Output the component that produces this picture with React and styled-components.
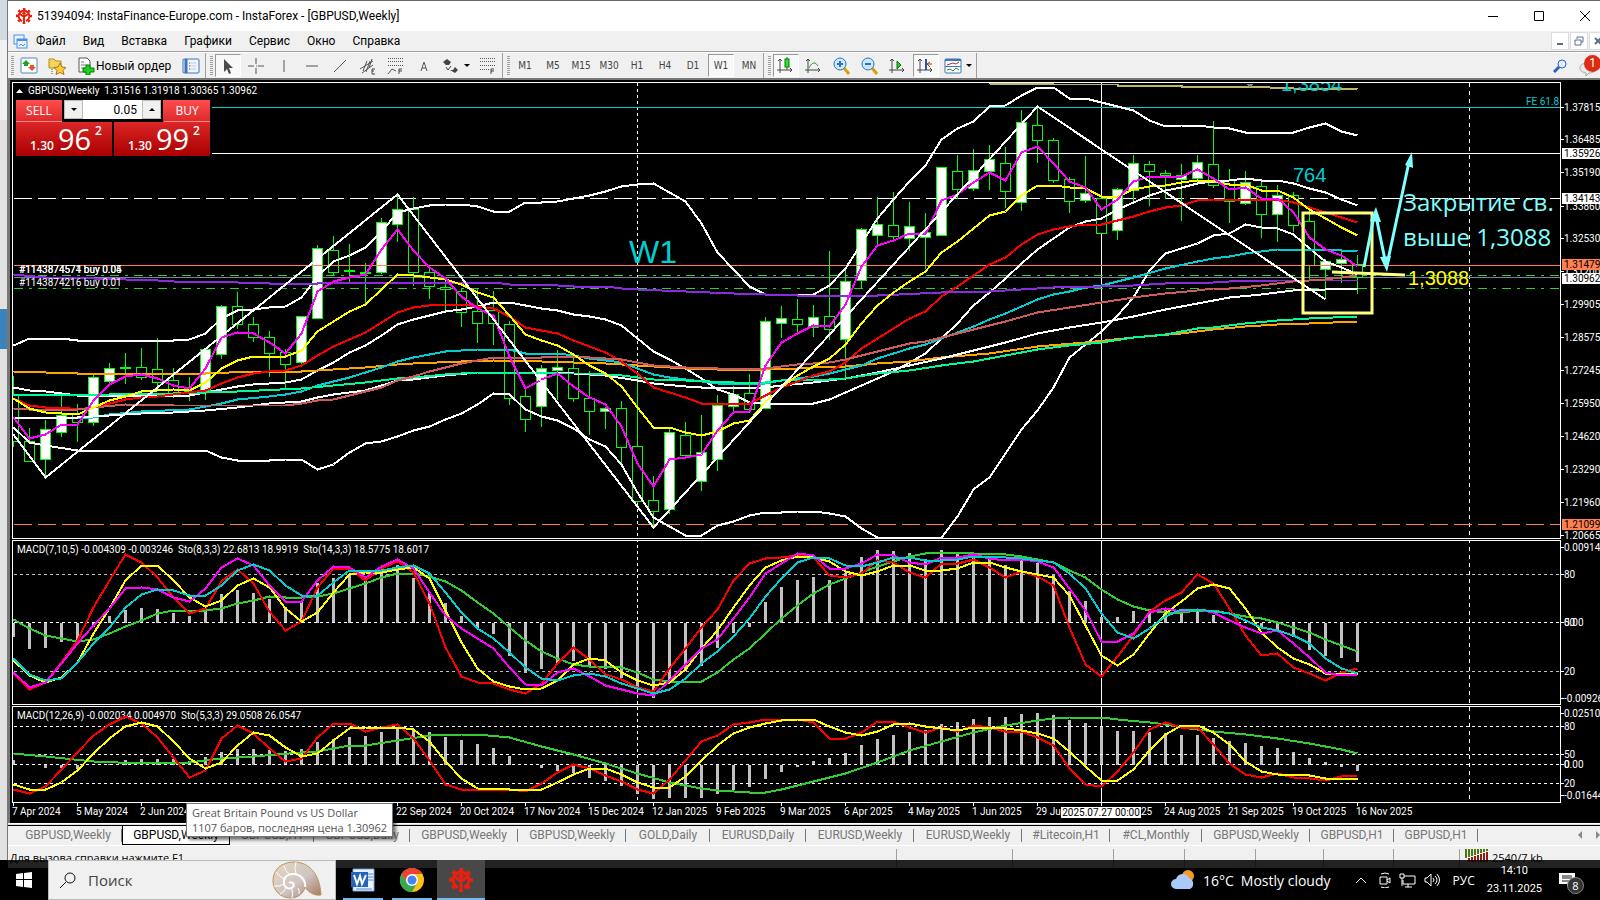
import styled, { createGlobalStyle, css } from 'styled-components';

const BAR_STEP = 16;
const FIRST_BAR = 13;
const barX = (index) => FIRST_BAR + index * BAR_STEP;

const parsePairs = (text) => text.split(' ').map((pair) => pair.split(',').map(Number));
const toPoints = (text) =>
  parsePairs(text)
    .map(([index, y]) => `${barX(index)},${y}`)
    .join(' ');

// high, low, body top, body bottom, 1 = bullish
const candles = [
  [375, 446, 395, 441, 0], [427, 461, 441, 461, 0], [419, 476, 429, 459, 1], [395, 436, 415, 432, 1],
  [403, 441, 413, 422, 0], [373, 425, 377, 422, 1], [362, 383, 368, 381, 1], [352, 383, 367, 368, 0],
  [347, 379, 367, 377, 0], [337, 387, 369, 382, 0], [367, 397, 380, 393, 0], [376, 400, 391, 392, 0],
  [348, 399, 349, 390, 1], [304, 358, 306, 354, 1], [291, 328, 306, 324, 0], [316, 341, 324, 337, 0],
  [330, 376, 337, 353, 0], [348, 387, 352, 364, 0], [315, 364, 316, 362, 1], [244, 318, 248, 318, 1],
  [235, 275, 250, 272, 0], [243, 282, 270, 271, 0], [262, 302, 272, 272, 0], [217, 273, 222, 272, 1],
  [195, 241, 209, 224, 1], [196, 285, 209, 272, 0], [268, 298, 272, 286, 0], [277, 309, 287, 289, 0],
  [288, 326, 291, 312, 0], [288, 342, 311, 323, 0], [290, 344, 310, 323, 0], [320, 404, 324, 398, 0],
  [389, 431, 396, 419, 0], [364, 426, 368, 406, 1], [349, 399, 367, 370, 1], [352, 401, 368, 398, 0],
  [370, 434, 398, 411, 0], [406, 428, 408, 411, 1], [400, 463, 408, 447, 0], [373, 502, 446, 501, 0],
  [475, 527, 500, 511, 0], [428, 513, 432, 509, 1], [421, 458, 435, 455, 0], [414, 490, 452, 481, 1],
  [394, 470, 405, 459, 1], [385, 410, 394, 406, 1], [373, 412, 393, 409, 0], [316, 408, 321, 408, 1],
  [305, 337, 318, 323, 1], [298, 332, 319, 324, 0], [304, 336, 317, 327, 1], [250, 339, 316, 329, 0],
  [267, 377, 281, 339, 1], [227, 287, 229, 280, 1], [196, 244, 224, 235, 1], [191, 238, 225, 236, 0],
  [201, 250, 226, 238, 1], [212, 268, 232, 237, 1], [167, 235, 167, 235, 1], [154, 198, 171, 189, 0],
  [148, 190, 170, 188, 1], [144, 189, 159, 171, 1], [146, 207, 163, 191, 0], [109, 210, 122, 202, 1],
  [106, 162, 125, 140, 0], [137, 182, 140, 180, 0], [176, 212, 179, 201, 0], [155, 202, 193, 200, 1],
  [195, 233, 198, 233, 0], [187, 239, 189, 230, 1], [154, 202, 163, 190, 1], [160, 205, 164, 171, 0],
  [169, 198, 173, 175, 0], [163, 220, 175, 179, 1], [154, 181, 162, 178, 1], [120, 187, 164, 185, 0],
  [168, 222, 180, 201, 0], [170, 204, 182, 203, 1], [180, 237, 186, 214, 0], [184, 241, 195, 214, 1],
  [191, 231, 195, 225, 0], [209, 279, 221, 265, 0], [258, 298, 261, 269, 1], [248, 282, 259, 263, 1],
  [254, 293, 264, 277, 0],
];

const priceLines = [
  ['#bdb76b', '61,83 65,84 69,84 69,85 73,85 73,86 77,86 80,88 84,89'],
  ['#fff', '0,345 1,338 3,338 4,340 10,340 11,339 12,333 13,318 14,310 15,309 16,307 17,306 18,297 19,276 20,261 21,255 22,247 23,231 24,212 25,208 26,205 27,204 28,204 29,206 30,211 31,211 32,202 33,202 34,201 35,198 36,195 37,191 38,186 39,184 40,183 41,192 42,201 43,223 44,252 45,269 46,286 47,294 50,294 51,285 52,268 53,243 54,218 55,199 56,181 57,165 58,139 59,128 60,121 61,106 62,105 63,95 64,87 65,87 66,98 67,98 68,102 69,106 70,110 71,120 72,126 73,125 74,125 75,127 76,128 77,132 80,132 81,127 82,123 83,131 84,135'],
  ['#fff', '0,427 1,442 2,445 4,450 12,450 13,457 14,460 16,460 17,459 18,459 19,469 20,464 21,452 22,443 23,441 24,436 25,430 26,426 27,419 28,413 29,404 30,393 31,394 32,409 33,416 34,420 35,428 36,439 37,446 38,464 39,492 40,517 41,526 42,535 43,535 44,525 45,521 46,515 47,512 48,512 49,511 50,511 51,513 52,516 53,528 54,537 57,538 58,537 59,516 60,489 61,477 62,453 63,429 64,410 65,387 66,357 67,344 68,331 69,315 70,297 71,270 72,253 73,248 74,243 75,235 76,233 77,224 78,227 79,228 80,234 81,248 82,261 83,267 84,274'],
  ['#fff', '0,387 1,390 2,391 3,393 4,395 11,395 12,392 13,389 14,386 15,384 17,382 18,379 19,370 20,362 21,352 22,345 23,335 24,324 25,319 26,315 27,311 28,309 29,306 30,302 31,302 32,305 33,308 34,310 35,314 36,316 37,319 38,325 39,338 40,351 41,359 42,368 43,378 44,389 45,394 46,402 47,403 49,403 50,403 51,399 52,392 53,385 54,378 55,371 56,362 57,353 58,338 59,323 60,305 61,292 62,278 63,263 64,249 65,238 66,227 67,221 68,218 69,209 70,202 71,195 72,190 73,187 74,183 75,181 76,180 77,178 78,180 79,180 80,183 81,188 82,192 83,199 84,205'],
  ['#ffa500', '0,371 2,372 4,373 12,373 15,371 18,371 20,369 22,367 24,364 25,363 28,361 30,360 33,361 35,362 37,363 40,366 42,368 44,369 47,369 49,368 50,367 52,366 54,363 56,361 58,357 61,353 64,346 67,342 70,337 73,333 75,329 77,326 79,324 81,323 84,321'],
  ['#00ced1', '1,418 5,417 6,414 8,411 11,409 12,406 13,403 14,399 16,396 17,394 18,391 19,385 20,381 21,377 22,372 23,367 24,361 25,357 26,354 27,351 28,350 29,349 31,349 32,353 34,353 35,355 36,358 37,360 38,362 39,368 40,374 41,377 42,379 44,383 46,384 47,383 48,380 50,376 51,373 52,369 53,365 54,358 56,348 57,344 58,338 60,326 61,319 62,313 63,306 64,299 65,294 66,291 67,287 68,285 69,281 70,277 72,268 74,261 75,258 76,256 77,253 78,251 79,249 82,249 83,250 84,251'],
  ['#fff', '0,417 4,417 6,415 8,413 10,412 12,410 14,407 16,403 18,401 19,397 20,394 22,390 24,380 25,379 27,375 29,372 31,372 35,373 37,375 39,380 40,383 42,386 43,387 47,387 48,385 50,382 51,380 52,378 54,372 56,365 58,358 60,350 62,342 64,333 66,327 68,322 70,316 72,309 74,303 76,297 78,294 80,290 82,289 84,288'],
  ['#00fa9a', '0,394 2,395 10,393 14,391 18,388 22,382 24,378 25,377 27,374 29,372 31,372 34,373 36,373 38,375 40,379 42,380 45,382 47,382 48,380 50,379 51,379 52,378 54,373 56,370 58,365 60,361 62,355 64,349 66,345 68,342 70,337 72,334 74,328 75,327 77,323 79,320 81,318 84,316'],
  ['#ff0000', '0,398 1,405 2,407 3,407 4,409 5,407 6,403 7,399 8,397 9,396 11,392 12,390 13,383 14,377 15,373 16,371 17,370 18,365 19,355 20,346 21,339 22,332 23,322 24,312 25,307 26,305 27,304 28,304 29,306 30,308 31,316 32,327 33,330 34,333 35,340 36,346 37,352 38,361 39,373 40,387 41,392 42,397 43,403 46,403 47,395 48,387 49,381 50,375 51,371 52,362 53,348 54,338 55,328 56,318 57,311 58,296 59,286 60,275 61,264 62,257 63,244 64,234 65,229 66,226 67,224 68,224 69,220 70,216 71,211 72,207 73,205 74,200 75,199 79,199 80,202 81,207 82,212 83,217 84,222'],
  ['#8a2be2', '0,274 2,277 5,278 7,279 9,280 10,281 14,282 16,283 19,283 20,282 30,282 31,284 34,285 35,286 37,286 38,288 39,289 42,291 45,293 49,295 54,295 58,292 61,291 63,289 65,287 68,286 70,285 72,283 75,282 76,281 79,280 84,280'],
  ['#cd5c5c', '0,408 1,409 4,409 5,407 7,404 10,405 17,405 18,403 19,400 20,399 21,395 22,391 23,387 24,380 25,376 26,371 27,367 28,363 29,360 30,357 33,357 35,356 37,358 38,359 39,362 40,365 42,367 44,368 47,368 48,366 49,364 50,363 51,362 52,359 53,355 54,351 56,343 57,341 58,337 60,329 62,321 64,312 66,307 68,302 70,297 72,293 74,290 75,288 76,288 78,285 80,281 82,279 83,277 84,275'],
  ['#ffff00', '0,398 1,408 2,412 4,414 5,407 6,400 7,396 8,391 9,390 10,389 11,390 12,382 13,368 14,360 15,356 17,356 18,350 19,331 20,321 21,311 22,304 23,289 24,274 25,275 26,277 27,279 28,284 29,292 30,297 31,315 32,334 33,340 34,345 35,354 36,365 37,373 38,386 39,407 40,427 41,427 42,432 43,435 44,431 45,423 46,420 47,402 48,387 49,375 50,366 51,358 52,344 53,323 54,305 55,292 56,281 57,271 58,252 59,241 60,228 61,215 62,211 63,195 64,185 65,185 66,187 67,188 68,196 69,196 70,189 71,186 72,185 73,182 74,180 75,181 76,184 77,184 78,190 79,190 80,197 81,209 82,218 83,227 84,235'],
  ['#ff00ff', '0,417 1,438 2,434 3,424 4,424 5,400 6,384 7,376 8,374 9,378 10,385 11,388 12,368 13,337 14,332 15,333 16,342 17,353 18,333 19,291 20,281 21,277 22,274 23,249 24,229 25,250 26,267 27,278 28,296 29,308 30,315 31,356 32,388 33,379 34,373 35,386 36,397 37,404 38,426 39,463 40,486 41,459 42,457 43,454 44,430 45,412 46,411 47,365 48,342 49,333 50,325 51,326 52,304 53,266 54,245 55,240 56,233 57,233 58,200 59,194 60,182 61,172 62,180 63,152 64,146 65,163 66,181 67,187 68,209 69,199 70,181 71,176 73,176 74,169 75,178 76,189 77,187 78,198 79,198 80,212 81,237 82,249 83,255 84,266'],
];

const fastHistogram =
  '0,636 1,648 2,647 3,641 4,640 5,626 6,615 7,609 8,607 9,608 10,612 11,615 12,610 13,593 14,589 15,592 16,598 17,606 18,600 19,582 20,577 21,574 22,579 23,570 24,564 25,577 26,592 27,602 28,615 29,627 30,633 31,655 32,672 33,668 34,663 35,660 36,665 37,668 38,677 39,688 40,697 41,680 42,670 43,665 44,647 45,632 46,626 47,601 48,586 49,579 50,576 51,579 52,572 53,556 54,549 55,550 56,552 57,558 58,549 59,553 60,555 61,555 62,564 63,558 64,562 65,574 66,590 67,600 68,616 69,616 70,610 71,608 72,609 73,610 74,610 75,614 78,627 79,630 80,636 81,649 82,655 83,657 84,661';

const fastLines = [
  ['#32cd32', '0,619 1,628 2,635 3,638 4,641 5,639 6,633 7,626 8,620 9,613 10,610 12,610 13,608 14,603 15,600 16,596 17,597 18,597 19,596 20,593 21,588 22,583 23,577 24,573 25,573 26,576 27,581 28,590 29,602 30,613 31,627 32,640 33,651 34,658 35,664 36,666 37,666 38,667 39,672 40,679 41,681 43,681 44,672 45,659 46,648 47,633 48,618 49,605 50,593 51,584 52,578 53,572 54,566 55,561 56,556 57,553 58,552 59,552 60,553 61,553 62,554 63,556 64,559 65,562 66,570 67,577 68,589 69,599 70,606 71,610 72,612 73,612 74,610 75,610 76,613 77,616 78,618 79,622 80,627 81,632 82,639 83,645 84,651'],
  ['#ff0000', '0,673 1,689 2,682 3,662 4,640 5,607 6,580 7,554 8,562 9,577 10,597 11,613 12,608 13,581 14,569 15,583 16,611 17,630 18,621 19,587 20,568 21,568 22,580 23,568 24,561 25,572 26,603 27,647 28,676 29,682 30,683 31,689 32,693 33,683 34,663 35,647 36,659 37,674 38,679 39,687 40,691 41,668 42,648 43,627 44,609 45,580 46,563 47,558 48,557 49,555 50,557 51,575 52,577 53,573 54,560 55,562 56,572 57,577 58,563 59,563 60,559 61,567 62,577 63,571 64,576 65,585 66,627 67,664 68,676 69,656 70,635 71,611 72,600 73,592 74,574 75,583 76,608 77,635 78,655 79,653 80,667 81,673 82,680 83,672 84,668'],
  ['#ffff00', '0,660 1,675 2,682 3,677 4,662 5,633 6,608 7,580 8,565 9,565 10,580 11,597 12,606 13,600 14,585 15,578 16,587 17,608 18,621 19,612 20,592 21,574 22,572 23,572 24,569 25,567 26,578 27,610 28,642 29,668 30,681 31,686 32,689 33,688 34,680 35,664 36,658 37,660 38,672 39,680 40,685 41,682 42,669 43,648 44,630 45,607 46,585 47,567 48,560 49,556 50,557 51,561 52,571 53,575 54,571 55,565 56,565 57,570 58,570 59,568 60,562 61,562 62,567 63,571 64,574 65,577 66,595 67,625 68,655 69,665 70,654 71,633 72,613 73,601 74,588 75,584 76,588 77,608 78,632 79,647 80,658 81,664 82,673 84,673'],
  ['#ff00ff', '0,672 1,687 2,682 3,663 4,643 5,625 6,608 7,588 8,587 9,589 10,597 11,601 12,588 13,567 14,558 15,565 16,585 17,601 18,601 19,580 20,566 21,567 22,577 23,566 24,559 25,568 26,592 27,615 28,628 29,638 30,648 31,667 32,684 33,685 34,672 35,668 36,676 37,685 38,689 39,693 40,695 41,680 42,664 43,648 44,639 45,618 46,597 47,573 48,563 49,553 50,555 51,568 52,568 53,563 54,554 55,555 56,562 57,564 58,557 59,557 60,554 61,558 62,560 63,559 64,561 65,567 66,588 67,610 68,641 69,641 70,633 71,612 72,608 73,611 74,609 75,612 76,620 77,627 78,633 79,630 80,643 81,657 82,672 83,675 84,674'],
  ['#00ced1', '0,658 1,674 2,680 3,678 4,662 5,643 6,627 7,607 8,594 9,589 10,590 11,595 12,595 13,585 14,570 15,564 16,570 17,585 18,595 19,595 20,582 21,570 23,570 24,567 25,565 26,573 27,592 28,612 29,628 30,638 31,652 32,667 33,678 34,680 35,675 36,673 37,676 38,683 39,688 40,693 41,689 42,678 43,663 44,651 45,636 46,618 47,596 48,578 49,562 50,557 51,558 52,565 53,566 54,562 55,557 56,557 57,560 58,560 59,559 60,556 61,556 62,557 63,558 64,560 65,562 66,573 67,588 68,613 69,632 70,638 71,628 72,616 73,609 74,609 75,611 76,613 77,620 78,627 79,630 80,635 81,643 82,658 83,668 84,673'],
];

const slowHistogram =
  '0,759 2,767 3,767 4,768 6,763 7,759 8,758 9,758 10,758 11,760 12,756 13,751 14,748 15,748 16,749 17,750 18,748 19,741 20,738 21,736 22,735 23,731 24,726 25,729 26,731 27,736 28,739 29,743 30,747 31,755 33,767 34,770 35,772 36,777 37,780 38,785 39,793 40,798 41,797 42,797 43,797 44,793 45,789 46,786 47,778 48,771 49,766 50,760 51,757 52,752 53,744 54,738 55,734 56,731 57,729 58,723 59,721 60,718 61,716 62,716 63,713 64,712 65,714 66,719 67,722 68,726 69,730 70,730 71,731 72,732 73,734 74,734 75,737 76,740 77,742 78,745 79,747 80,751 81,757 82,761 83,766 84,770';

const slowLines = [
  ['#32cd32', '0,753 2,756 5,761 8,763 11,762 13,758 15,756 18,752 19,751 20,748 21,745 22,745 24,740 26,735 28,734 29,734 31,737 33,746 35,754 37,763 39,773 41,782 43,788 44,790 46,792 47,792 48,789 49,785 50,781 52,773 54,762 56,750 58,741 60,732 62,725 64,720 65,718 66,717 68,717 69,719 71,722 72,724 73,727 75,731 77,734 79,738 81,743 83,749 84,753'],
  ['#ff0000', '0,789 1,793 2,786 3,769 4,752 5,735 6,724 7,716 8,723 9,737 10,757 11,777 12,770 13,738 14,725 15,733 16,748 17,761 18,758 19,737 20,723 21,723 22,731 23,727 24,724 25,738 26,760 27,784 28,789 31,789 32,791 33,783 34,772 35,764 36,768 37,775 38,781 39,789 40,793 41,779 42,760 43,741 44,735 45,724 46,722 47,719 49,719 50,722 51,738 52,738 53,732 54,721 55,721 56,727 57,732 58,727 59,731 60,725 61,727 62,731 63,731 64,737 65,745 66,768 67,784 68,786 69,771 70,752 71,729 72,722 73,727 74,727 75,744 76,763 77,774 78,777 79,773 80,777 81,778 82,780 83,776 84,775'],
  ['#ffff00', '0,784 1,789 2,789 3,782 4,770 5,753 6,738 7,726 8,722 9,726 10,741 11,758 12,768 13,762 14,745 15,732 16,735 17,747 18,756 19,753 20,740 21,728 22,727 24,727 25,729 26,741 27,761 28,778 29,788 31,789 33,789 34,782 35,774 36,768 37,768 38,774 39,782 40,787 41,787 42,776 43,760 44,745 45,733 46,727 47,723 48,720 49,719 50,719 51,726 52,732 53,735 54,731 55,724 56,723 57,726 58,728 59,730 60,727 61,727 62,728 63,730 64,733 65,738 66,751 67,766 68,780 69,780 70,769 71,750 72,734 73,725 74,725 75,732 76,744 77,761 78,771 79,774 81,775 82,778 84,778'],
];

const dates = [
  '7 Apr 2024', '5 May 2024', '2 Jun 2024', '30 Jun 2024', '28 Jul 2024', '25 Aug 2024', '22 Sep 2024',
  '20 Oct 2024', '17 Nov 2024', '15 Dec 2024', '12 Jan 2025', '9 Feb 2025', '9 Mar 2025', '6 Apr 2025',
  '4 May 2025', '1 Jun 2025', '29 Jun 2025', '27 Jul 2025', '24 Aug 2025', '21 Sep 2025', '19 Oct 2025',
  '16 Nov 2025',
];

const priceScale = [
  ['1.37815', 107], ['1.36485', 139], ['1.35190', 172], ['1.33860', 206], ['1.32530', 238], ['1.31200', 271],
  ['1.29905', 304], ['1.28575', 337], ['1.27245', 370], ['1.25950', 403], ['1.24620', 436], ['1.23290', 469],
  ['1.21960', 502], ['1.20665', 535],
  ['1.35926', 153, '#fff'], ['1.34143', 198, '#fff'], ['1.31479', 264, '#ff7f50'], ['1.30962', 278, '#fff'],
  ['1.21099', 524, '#ff7f50'],
];
const fastScale = [['0.009141', 547], ['80', 574], ['50', 622], ['0.00', 622], ['20', 671], ['-0.009260', 698]];
const slowScale = [['0.025109', 713], ['80', 726], ['50', 754], ['0', 764], ['0.00', 764], ['20', 783], ['-0.016440', 795]];

const tabs = [
  ['GBPUSD,Weekly', 108], ['GBPUSD,Weekly', 108], ['GBPUSD,H1', 84], ['GBPUSD,Daily', 96], ['GBPUSD,Weekly', 108],
  ['GBPUSD,Weekly', 108], ['GOLD,Daily', 84], ['EURUSD,Daily', 96], ['EURUSD,Weekly', 108], ['EURUSD,Weekly', 108],
  ['#Litecoin,H1', 88], ['#CL,Monthly', 92], ['GBPUSD,Weekly', 108], ['GBPUSD,H1', 84], ['GBPUSD,H1', 84],
];

const GearLogo = ({ size }) => (
  <svg width={size} height={size} viewBox="0 0 24 24">
    <g fill="none" stroke="#e8200f">
      <path d="M9 19.500A8 8 0 1 1 15 19.500" strokeWidth="3" />
      <circle cx="12" cy="12" r="10.500" strokeWidth="3" strokeDasharray="4 4.247" strokeDashoffset="2" />
      <path d="M6 9l4 3h4l4-3M12 12v12" strokeWidth="3" />
    </g>
    <circle cx="12" cy="8" r="2.500" fill="#e8200f" />
  </svg>
);

const axis = <path d="M3 2v14M0 13h15M1 4l2-2 2 2M13 11l2 2-2 2" />;

const icons = {
  market: (
    <>
      <rect x="1" y="1" width="16" height="15" rx="1" fill="#fff" stroke="#4a86c5" />
      <path d="M6 3l4 4H8v2H4V7H2z" fill="#1fa51f" />
      <path d="M12 14l-4-4h2V8h4v2h2z" fill="#e2571b" />
    </>
  ),
  favorites: (
    <>
      <path d="M1 2h5l2 2h5v7H1z" fill="#f5d45b" stroke="#b18c1b" />
      <path d="M4 12v5" stroke="#555" strokeDasharray="1 1" />
      <path d="M12 6l2 4 4 .5-3 3 1 4-4-2-4 2 1-4-3-3 4-.5z" fill="#fbcb3a" stroke="#a87b12" />
    </>
  ),
  order: (
    <>
      <path d="M2 1h8l3 3v11H2z" fill="#fff" stroke="#555" />
      <path d="M4 5h3M4 8h6M4 11h4" stroke="#777" />
      <path d="M9 8h4v3h4v4h-4v3H9v-3H6v-4h3z" fill="#1fd01f" stroke="#0a7a0a" />
    </>
  ),
  terminal: (
    <>
      <rect x="1" y="2" width="16" height="14" rx="1" fill="#eef5ff" stroke="#3b74b8" />
      <path d="M4 2v14" stroke="#3b74b8" strokeWidth="3" />
      <path d="M8 6h6M8 9h6M8 12h6" stroke="#bcd" />
      <path d="M7 6h1M7 9h1M7 12h1" stroke="#c33" />
    </>
  ),
  cursor: <path d="M5 2v13l3-3 2 5 2-1-2-5h4z" fill="#4a4a4a" />,
  crosshair: <path d="M9 1v6M9 11v6M1 9h6M11 9h6M9 9h1" stroke="#555" />,
  vertical: <path d="M9 3v12" stroke="#555" />,
  horizontal: <path d="M3 9h12" stroke="#555" />,
  trend: <path d="M3 15L15 3" stroke="#555" />,
  channel: (
    <>
      <path d="M1 12L14 4M3 16L14 8M4 14L8 4M7 15l4-11M10 11l3-9" stroke="#555" />
      <path d="M16 12h-3v5h3M13 14h2" stroke="#444" fill="none" />
    </>
  ),
  fibo: (
    <>
      <path d="M1 1.500h15M1 4.500h15M1 8.500h15" stroke="#555" strokeDasharray="1 1" />
      <path d="M1 17l4-5 4 2" stroke="#555" fill="none" />
      <path d="M12 17v-5h3M12 14h3" stroke="#444" fill="none" />
    </>
  ),
  text: <path d="M6 14L9 5l3 9M7 11h4" stroke="#555" fill="none" strokeWidth="1" />,
  arrows: (
    <>
      <path d="M1 5l4-3 4 3-2 3H4zM8 13h3l2-3 3 3-3 3z" fill="#444" />
      <path d="M4 10l2 3 3-4" stroke="#444" fill="none" />
    </>
  ),
  levels: (
    <>
      <path d="M1 1.500h15M1 4.500h15M1 8.500h15M1 12.500h10" stroke="#555" strokeDasharray="1 1" />
      <path d="M12 17v-5h3M12 14h3" stroke="#444" fill="none" />
    </>
  ),
  candle: (
    <>
      <g stroke="#444" fill="none">{axis}</g>
      <path d="M10 0v13" stroke="#0a7a0a" />
      <rect x="8" y="2" width="4" height="8" fill="#2fe02f" stroke="#0a7a0a" />
    </>
  ),
  line: (
    <>
      <g stroke="#444" fill="none">{axis}</g>
      <path d="M4 11c2-4 5-8 9-2" stroke="#2a9a2a" fill="none" />
    </>
  ),
  zoomIn: (
    <>
      <path d="M11 11l5 6" stroke="#d9a400" strokeWidth="3" />
      <circle cx="7" cy="7" r="6" fill="#c9e6fa" stroke="#3176b5" strokeWidth="1" />
      <path d="M4 7h6M7 4v6" stroke="#3176b5" strokeWidth="2" />
    </>
  ),
  zoomOut: (
    <>
      <path d="M11 11l5 6" stroke="#d9a400" strokeWidth="3" />
      <circle cx="7" cy="7" r="6" fill="#c9e6fa" stroke="#3176b5" strokeWidth="1" />
      <path d="M4 7h6" stroke="#3176b5" strokeWidth="2" />
    </>
  ),
  scroll: (
    <>
      <g stroke="#444" fill="none">{axis}</g>
      <path d="M8 4l4 4-4 4z" fill="#2fc02f" stroke="#0a7a0a" />
    </>
  ),
  shift: (
    <>
      <g stroke="#444" fill="none">{axis}</g>
      <path d="M9 2v11" stroke="#1c5f9c" strokeWidth="2" />
      <path d="M15 7h-4M13 5l-3 2 3 3" stroke="#b2300f" fill="none" />
    </>
  ),
  template: (
    <>
      <rect x="1" y="2" width="16" height="14" rx="1" fill="#fff" stroke="#3b74b8" strokeWidth="1" />
      <path d="M1 3h16" stroke="#3b74b8" strokeWidth="2" />
      <path d="M1 9.500h16" stroke="#3b74b8" />
      <path d="M3 8l3-1 3-1 3 1 3-2" stroke="#a33" fill="none" />
      <path d="M3 13l3-1 3 2 3-3 3 2" stroke="#2a8a2a" fill="none" />
    </>
  ),
};

const Icon = ({ name }) => (
  <svg width="18" height="18" viewBox="0 0 18 18">
    {icons[name]}
  </svg>
);

const drawingTools = [
  ['cursor', 'Курсор'], ['crosshair', 'Перекрестие'], ['vertical', 'Вертикальная линия'],
  ['horizontal', 'Горизонтальная линия'], ['trend', 'Трендовая линия'], ['channel', 'Канал'],
  ['fibo', 'Фибоначчи'], ['text', 'Текст'],
];
const chartTools = [
  ['candle', 'Свечи'], ['line', 'Линия'], ['zoomIn', 'Увеличить'], ['zoomOut', 'Уменьшить'],
  ['scroll', 'Автопрокрутка'], ['shift', 'Сдвиг графика'],
];

const Toolbar = () => (
  <ToolbarRow>
    <ToolGroup>
      <Grip />
      <ToolButton aria-label="Обзор рынка"><Icon name="market" /></ToolButton>
      <ToolButton aria-label="Избранное"><Icon name="favorites" /></ToolButton>
      <OrderButton>
        <Icon name="order" />
        Новый ордер
      </OrderButton>
      <ToolButton aria-label="Терминал"><Icon name="terminal" /></ToolButton>
    </ToolGroup>
    <ToolGroup>
      <Grip />
      {drawingTools.map(([name, label]) => (
        <ToolButton key={name} aria-label={label} $pressed={name === 'cursor'}>
          <Icon name={name} />
        </ToolButton>
      ))}
      <ToolButton aria-label="Стрелки" $wide>
        <Icon name="arrows" />
        <Caret />
      </ToolButton>
      <ToolButton aria-label="Уровни"><Icon name="levels" /></ToolButton>
    </ToolGroup>
    <ToolGroup>
      <Grip />
      {['M1', 'M5', 'M15', 'M30', 'H1', 'H4', 'D1', 'W1', 'MN'].map((period) => (
        <ToolButton key={period} $pressed={period === 'W1'}>{period}</ToolButton>
      ))}
    </ToolGroup>
    <ToolGroup>
      <Grip />
      {chartTools.map(([name, label]) => (
        <ToolButton key={name} aria-label={label} $pressed={name === 'candle' || name === 'shift'}>
          <Icon name={name} />
        </ToolButton>
      ))}
      <ToolButton aria-label="Шаблоны" $wide>
        <Icon name="template" />
        <Caret />
      </ToolButton>
    </ToolGroup>
    <ToolbarEnd>
      <PlainButton aria-label="Поиск по терминалу">
        <svg width="14" height="14" viewBox="0 0 14 14" fill="none" stroke="#2b5fc4">
          <circle cx="9" cy="5" r="4" strokeWidth="1" fill="#e8f2ff" />
          <path d="M6 8l-5 5" strokeWidth="3" />
        </svg>
      </PlainButton>
      <MessageButton aria-label="Сообщения">
        <svg width="18" height="16" viewBox="0 0 18 16">
          <path d="M9 2c5 0 8 2 8 5s-3 5-7 5l-3 3v-3c-4-1-6-2-6-5s3-5 8-5z" fill="#e9e9ee" stroke="#a8a8b0" />
        </svg>
        <MessageCount>1</MessageCount>
      </MessageButton>
    </ToolbarEnd>
  </ToolbarRow>
);

const Curves = ({ lines }) =>
  lines.map(([color, data], i) => (
    <polyline key={i} points={toPoints(data)} fill="none" stroke={color} strokeWidth="2" />
  ));

const Histogram = ({ data, zero }) =>
  parsePairs(data).map(([index, y]) => (
    <rect
      key={index}
      x={barX(index) - 2}
      y={Math.min(y, zero)}
      width="3"
      height={Math.abs(y - zero)}
      fill="#c0c0c0"
    />
  ));

const TimeMarkers = () => (
  <g stroke="#fff">
    <path d="M637 82V810" strokeDasharray="3 3" />
    <path d="M1469 82V810" strokeDasharray="4 4" />
    <path d="M1101 82V810" />
  </g>
);

const Scale = ({ items, top }) => (
  <ScaleColumn>
    <g transform={`translate(-1561 ${-top})`}>
      {items.map(([label, y, badge]) => (
        <g key={label + y}>
          {badge ? (
            <rect x="1562" y={y - 5} width="60" height="11" fill={badge} />
          ) : (
            <rect x="1561" y={y} width="3" height="1" fill="#fff" />
          )}
          <text x="1564" y={y + 4} fill={badge ? '#000' : '#fff'}>
            {label}
          </text>
        </g>
      ))}
    </g>
  </ScaleColumn>
);

const PricePane = () => (
  <Pane $grow={457}>
    <Plot>
      <g transform="translate(-11.500 -81.500)" shapeRendering="crispEdges">
        <TimeMarkers />
        <line x1="13" x2="3000" y1="107" y2="107" stroke="#00ced1" />
        <line x1="13" x2="3000" y1="198" y2="198" stroke="#fff" strokeDasharray="18 6" />
        <line x1="13" x2="3000" y1="275" y2="275" stroke="#32cd32" strokeDasharray="9 6 3 6" />
        <line x1="13" x2="3000" y1="288" y2="288" stroke="#32cd32" strokeDasharray="9 6 3 6" />
        <line x1="13" x2="3000" y1="524" y2="524" stroke="#ff7f50" strokeDasharray="18 6" />
        <line x1="13" x2="3000" y1="277" y2="277" stroke="#778899" />
        {candles.map(([high, low, top, bottom, up], i) => (
          <g key={i} stroke="#00ff00" fill={up ? '#fff' : '#000'}>
            <path d={`M${barX(i)} ${high}V${low}`} />
            <rect x={barX(i) - 5} y={top} width="10" height={Math.max(bottom - top, 1)} />
          </g>
        ))}
        <line x1="13" x2="3000" y1="153" y2="153" stroke="#fff" />
        <line x1="13" x2="3000" y1="265" y2="265" stroke="#ff7f50" />
        <Curves lines={priceLines} />
        <polyline
          points="13,434 45,477 397,194 653,527 1037,106 1325,299"
          fill="none"
          stroke="#fff"
          strokeWidth="2"
        />
        <path d="M1245 83h8l-4 4z" fill="#778899" />
      </g>
      <g transform="translate(-12 -82)">
        <SvgText x="28" y="94">GBPUSD,Weekly&nbsp; 1.31516 1.31918 1.30365 1.30962</SvgText>
        <path d="M16 93l3.500-4 3.500 4z" fill="#fff" />
        <SvgText x="19" y="273">#1143874574 buy 0.04</SvgText>
        <SvgText x="19" y="273">#1143874571 buy 0.05</SvgText>
        <SvgText x="19" y="286">#1143874216 buy 0.01</SvgText>
        <SvgText x="1526" y="105" $color="#00ced1">FE 61.8</SvgText>
        <MarkText x="629" y="263" $size={32}>W1</MarkText>
        <MarkText x="1293" y="182" $size={20}>764</MarkText>
        <MarkText x="1281" y="91" $size={20}>1,3854</MarkText>
        <MarkText x="1408" y="285" $size={20} $color="#ffff00">1,3088</MarkText>
        <rect x="1303" y="213" width="69" height="100" fill="none" stroke="#ffff80" strokeWidth="3" />
        <path d="M1332 272L1405 275" stroke="#ffff80" strokeWidth="3" />
        <g stroke="#80ffff" strokeWidth="3" fill="none">
          <path d="M1364 267L1374 216M1376 216L1385 260M1388 260L1409 162" />
        </g>
        <path d="M1376 207l5 15-11-1zM1387 272l-7-15 11-1zM1412 152l1 16-8-3z" fill="#80ffff" />
        <NoteText x="1403" y="211">Закрытие св.</NoteText>
        <NoteText x="1403" y="246">выше 1,3088</NoteText>
      </g>
    </Plot>
    <Scale items={priceScale} top={82} />
    <TradePanel>
      <TradeSide $side="sell">
        <TradeLabel>SELL</TradeLabel>
        <TradePrice><small>1.30</small>96<sup>2</sup></TradePrice>
      </TradeSide>
      <TradeSide $side="buy">
        <TradeLabel>BUY</TradeLabel>
        <TradePrice><small>1.30</small>99<sup>2</sup></TradePrice>
      </TradeSide>
      <VolumeBox>
        <VolumeButton aria-label="Уменьшить объём"><Caret /></VolumeButton>
        <VolumeInput aria-label="Объём" defaultValue="0.05" />
        <VolumeButton aria-label="Увеличить объём"><Caret $up /></VolumeButton>
      </VolumeBox>
    </TradePanel>
  </Pane>
);

const IndicatorPane = ({ grow, top, title, levels, levelColor, zero, histogram, lines, scale }) => (
  <Pane $grow={grow}>
    <Plot>
      <g transform={`translate(-11.500 ${0.5 - top})`} shapeRendering="crispEdges">
        <TimeMarkers />
        <Histogram data={histogram} zero={zero} />
        {levels.map((y) => (
          <line
            key={y}
            x1="13"
            x2="3000"
            y1={y}
            y2={y}
            stroke={y === zero ? '#fff' : levelColor}
            strokeDasharray="3 3"
          />
        ))}
      </g>
      <SvgText x="5" y="13">{title}</SvgText>
      <g transform={`translate(-11.500 ${0.5 - top})`} shapeRendering="crispEdges">
        <Curves lines={lines} />
      </g>
    </Plot>
    <Scale items={scale} top={top} />
  </Pane>
);

const Taskbar = () => (
  <TaskbarRow>
    <StartButton aria-label="Пуск">
      <svg width="16" height="16" viewBox="0 0 16 16" fill="#fff">
        <path d="M0 2l7-1v6H0zM8 1l8-1v7H8zM0 8h7v7l-7-1zM8 8h8v8l-8-1z" />
      </svg>
    </StartButton>
    <SearchBox>
      <svg width="17" height="17" viewBox="0 0 17 17" fill="none" stroke="#111">
        <circle cx="10" cy="6" r="5" />
        <path d="M6 10l-6 6" />
      </svg>
      <input aria-label="Поиск" placeholder="Поиск" />
      <svg width="50" height="38" viewBox="0 0 50 38">
        <defs>
          <linearGradient id="shell" x1="0" y1="0" x2="1" y2="1">
            <stop offset="0" stopColor="#e8d6bd" />
            <stop offset=".55" stopColor="#cfc6c4" />
            <stop offset="1" stopColor="#a87458" />
          </linearGradient>
        </defs>
        <path
          d="M49 34c-7 1-13-3-16-8-1 6-7 11-14 11C8 37 1 29 1 20 1 9 9 1 22 1c15 0 26 12 27 33z"
          fill="url(#shell)"
          stroke="#b89568"
        />
        <path
          d="M33 26c1-6-4-13-12-13-7 0-10 5-9 10 1 4 6 6 9 3 2-3-1-6-4-4"
          fill="none"
          stroke="#fff"
          strokeWidth="2"
        />
        <path
          d="M12 23q-5 3-10 2M13 18q-6-2-9-7M18 14q-5-4-6-9M24 13q-2-5 0-12M14 27q-2 4-6 6M20 28q1 5 0 9M26 27q2 3 1 6"
          fill="none"
          stroke="#fff"
        />
      </svg>
    </SearchBox>
    <TaskButton aria-label="Word" $first>
      <svg width="24" height="24" viewBox="0 0 24 24">
        <path d="M2 1h21v22H2z" fill="#eaf3fd" stroke="#79a8dd" />
        <path d="M17 6h5M17 9h5M17 12h5M5 21h16" stroke="#4e86cc" />
        <path d="M0 4h17v15H0z" fill="#2465ba" />
        <path d="M3 7l3 9 3-8 2 8 4-9" fill="none" stroke="#fff" strokeWidth="2" />
      </svg>
    </TaskButton>
    <TaskButton aria-label="Chrome">
      <svg width="24" height="24" viewBox="0 0 24 24">
        <circle cx="12" cy="12" r="12" fill="#fbc116" />
        <path d="M12 6h10.400A12 12 0 0 0 1.600 6L7 15z" fill="#ea4335" />
        <path d="M1.600 6A12 12 0 0 0 12 24l5-9-10 0z" fill="#34a853" />
        <circle cx="12" cy="12" r="6" fill="#fff" />
        <circle cx="12" cy="12" r="4.500" fill="#4285f4" />
      </svg>
    </TaskButton>
    <TaskButton aria-label="InstaForex" $active>
      <GearLogo size={24} />
    </TaskButton>
    <Tray>
      <Weather>
        <svg width="26" height="22" viewBox="0 0 26 22">
          <circle cx="18" cy="7" r="6" fill="#f59a23" />
          <path d="M6 20a5 5 0 0 1 0-10 7 7 0 0 1 13-1 6 6 0 0 1 1 11z" fill="#a9c9f7" />
        </svg>
        <span>16°C</span>
        <span>Mostly cloudy</span>
      </Weather>
      <TrayIcons>
        <svg width="16" height="16" viewBox="0 0 16 16"><path d="M1 11l5-5 5 5" /></svg>
        <svg width="12" height="16" viewBox="0 0 12 16">
          <path d="M1 5h7v7H1zM8 8l3-2v5l-3-2M2 2q4-2 8 0M2 15q4 2 8 0" />
        </svg>
        <svg width="17" height="16" viewBox="0 0 17 16">
          <path d="M5 4h11v8H4V8M9 12v3M6 15h7M1 2h4v4H1zM3 6v8" />
        </svg>
        <svg width="16" height="16" viewBox="0 0 16 16">
          <path d="M1 6h2l4-4v12l-4-4H1zM9 6q2 2 0 4M11 4q4 4 0 8M13 2q5 6 0 12" />
        </svg>
      </TrayIcons>
      <Language>РУС</Language>
      <Clock>
        <span>14:10</span>
        <span>23.11.2025</span>
      </Clock>
      <Notifications aria-label="Уведомления">
        <svg width="16" height="16" viewBox="0 0 16 16">
          <path d="M0 1h16v11h-5l-3 3v-3H0z" fill="#fff" />
          <path d="M3 4h10M3 6h10M3 9h7" stroke="#111" />
        </svg>
        <NotificationCount>8</NotificationCount>
      </Notifications>
    </Tray>
  </TaskbarRow>
);

const App = () => {
  return (
    <Desktop>
      <GlobalStyle />
      <Workspace>
        <BackWindow>
          <BackSelection />
        </BackWindow>
        <AppWindow>
          <TitleBar>
            <GearLogo size={16} />
            <WindowTitle>51394094: InstaFinance-Europe.com - InstaForex - [GBPUSD,Weekly]</WindowTitle>
            <WindowControls>
              <PlainButton aria-label="Свернуть">
                <svg width="11" height="11" viewBox="0 0 11 11" stroke="#000"><path d="M0 5.500h10" /></svg>
              </PlainButton>
              <PlainButton aria-label="Развернуть">
                <svg width="11" height="11" viewBox="0 0 11 11" stroke="#000" fill="none">
                  <path d="M.5.500h9v9h-9z" />
                </svg>
              </PlainButton>
              <PlainButton aria-label="Закрыть">
                <svg width="11" height="11" viewBox="0 0 11 11" stroke="#000"><path d="M0 0l10 10M10 0L0 10" /></svg>
              </PlainButton>
            </WindowControls>
          </TitleBar>
          <MenuBar>
            <svg width="15" height="15" viewBox="0 0 15 15" fill="#eaf3ff" stroke="#4a8fe0">
              <rect x="1" y="1" width="10" height="9" />
              <rect x="4" y="5" width="10" height="9" />
              <path d="M4 6h10" strokeWidth="2" />
              <path d="M6 12l2-2 2 2 2-2" fill="none" />
            </svg>
            <nav>
              {['Файл', 'Вид', 'Вставка', 'Графики', 'Сервис', 'Окно', 'Справка'].map((item) => (
                <button key={item}>{item}</button>
              ))}
            </nav>
            <ChildControls>
              <button aria-label="Свернуть график">
                <svg width="10" height="10" viewBox="0 0 10 10"><path d="M2 8h6" /></svg>
              </button>
              <button aria-label="Восстановить график">
                <svg width="10" height="10" viewBox="0 0 10 10">
                  <path d="M3 3V1h6v5H7M1 4h6v5H1z" strokeWidth="1" fill="none" />
                </svg>
              </button>
              <button aria-label="Закрыть график">
                <svg width="10" height="10" viewBox="0 0 10 10"><path d="M2 2l6 6M8 2L2 8" /></svg>
              </button>
            </ChildControls>
          </MenuBar>
          <Toolbar />
          <ChartWindow>
            <PricePane />
            <IndicatorPane
              grow={165}
              top={540}
              title={'MACD(7,10,5) -0.004309 -0.003246\u00a0 Sto(8,3,3) 22.6813 18.9919\u00a0 Sto(14,3,3) 18.5775 18.6017'}
              levels={[574, 622, 671]}
              levelColor="#c0c0c0"
              zero={622}
              histogram={fastHistogram}
              lines={fastLines}
              scale={fastScale}
            />
            <IndicatorPane
              grow={97}
              top={706}
              title={'MACD(12,26,9) -0.002034 0.004970\u00a0 Sto(5,3,3) 29.0508 26.0547'}
              levels={[726, 754, 764, 783]}
              levelColor="#fff"
              zero={764}
              histogram={slowHistogram}
              lines={slowLines}
              scale={slowScale}
            />
            <DateAxis>
              {dates.map((date) => <span key={date}>{date}</span>)}
              <DateBadge>2025.07.27 00:00</DateBadge>
            </DateAxis>
          </ChartWindow>
          <TabStrip>
            {tabs.map(([label, width], i) => (
              <ChartTab key={i} $width={width} $active={i === 1}>{label}</ChartTab>
            ))}
            <TabArrows>
              <i />
              <i />
            </TabArrows>
            <Tooltip role="tooltip">
              Great Britain Pound vs US Dollar
              <br />
              1107 баров, последняя цена 1.30962
            </Tooltip>
          </TabStrip>
          <StatusBar>
            <StatusHint>Для вызова справки нажмите F1</StatusHint>
            {[116, 101, 71, 71, 68, 70, 66].map((width, i) => <StatusCell key={i} $width={width} />)}
            <StatusCell $width={141}>
              <svg width="24" height="14" viewBox="0 0 24 14">
                <path d="M1 0v9M4 0v8M7 0v7M10 0v6M13 0v5M16 0v4M19 0v3M22 0v2" stroke="#4c7a10" strokeWidth="2" />
                <path d="M4 13v-4M7 13v-5M10 13v-6M13 13v-7M16 13v-8M19 13v-9M22 13v-10" stroke="#8c1d10" strokeWidth="2" />
              </svg>
              2540/7 kb
            </StatusCell>
          </StatusBar>
        </AppWindow>
      </Workspace>
      <Taskbar />
    </Desktop>
  );
};

export default App;

const uiFont = `Roboto, 'Liberation Sans', sans-serif`;
const wideFont = `'Open Sans', 'Noto Sans', sans-serif`;

const GlobalStyle = createGlobalStyle`
  * {
    box-sizing: border-box;
  }
  body {
    margin: 0;
    overflow: hidden;
    background: #000;
    font-family: ${uiFont};
    font-size: 12px;
    color: #000;
  }
  button {
    border: 0;
    padding: 0;
    background: none;
    font: inherit;
    color: inherit;
  }
  svg {
    flex: none;
    display: block;
  }
`;

const Desktop = styled.div`
  display: flex;
  flex-direction: column;
  height: 100vh;
  min-height: 600px;
  overflow: hidden;
`;

const Workspace = styled.div`
  flex: 1;
  display: flex;
  min-height: 0;
  margin-bottom: -8px;
`;

const BackWindow = styled.div`
  width: 8px;
  flex: none;
  margin-bottom: 8px;
  padding-top: 309px;
  border-right: 1px solid #777;
  background: linear-gradient(#d3d9e0 40px, #f1f1f1 40px 120px, #e1e1e1 120px);
`;

const BackSelection = styled.div`
  height: 40px;
  background: #3b83bd;
`;

const AppWindow = styled.main`
  flex: 1;
  min-width: 0;
  display: flex;
  flex-direction: column;
  background: #f0f0f0;
`;

const TitleBar = styled.header`
  display: flex;
  align-items: center;
  height: 31px;
  flex: none;
  padding-left: 8px;
  border-top: 1px solid #666;
  background: #fff;
`;

const WindowTitle = styled.h1`
  margin: 0 0 0 5px;
  font-size: 12px;
  font-weight: 400;
`;

const PlainButton = styled.button`
  display: grid;
  place-items: center;
`;

const WindowControls = styled.div`
  display: flex;
  height: 100%;
  margin-left: auto;
  margin-right: -8px;

  ${PlainButton} {
    width: 46px;
  }
`;

const MenuBar = styled.div`
  display: flex;
  align-items: center;
  height: 21px;
  flex: none;
  padding-left: 5px;
  border-bottom: 1px solid #a0a0a0;
  overflow: hidden;

  nav {
    display: flex;
    gap: 17px;
    margin-left: 8px;
  }
`;

const ChildControls = styled.div`
  display: flex;
  gap: 1px;
  margin-left: auto;
  margin-right: -7px;

  button {
    display: grid;
    place-items: center;
    width: 18px;
    height: 18px;
    border: 1px solid #dcdcdc;
    background: #fff;
  }
  svg {
    stroke: #5a7184;
    stroke-width: 2;
  }
`;

const ToolbarRow = styled.div`
  display: flex;
  height: 28px;
  flex: none;
  border-top: 1px solid #fff;
  border-bottom: 2px solid #777;
`;

const ToolGroup = styled.div`
  display: flex;
  align-items: center;
  border-right: 1px solid #a0a0a0;
  margin-right: 1px;
`;

const Grip = styled.i`
  width: 3px;
  height: 20px;
  margin: 0 1px 0 3px;
  background: repeating-linear-gradient(#a0a0a0 0 1px, transparent 1px 2px);
`;

const ToolButton = styled.button`
  display: flex;
  align-items: center;
  justify-content: center;
  gap: 4px;
  width: ${({ $wide }) => ($wide ? 36 : 26)}px;
  height: 23px;
  margin: 0 ${({ $wide }) => ($wide ? 0 : 1)}px;
  font-family: 'DejaVu Sans Condensed', 'DejaVu Sans', sans-serif;
  font-size: 10px;
  color: #444;
  ${({ $pressed }) =>
    $pressed &&
    css`
      border: 1px solid;
      border-color: #999 #fff #fff #999;
      background: #f8f8f8;
    `}
`;

const OrderButton = styled.button`
  display: flex;
  align-items: center;
  width: 106px;
  padding-left: 6px;
  gap: 1px;
  white-space: nowrap;
`;

const Caret = styled.i`
  width: 0;
  height: 0;
  flex: none;
  border: 3px solid transparent;
  ${({ $up }) => ($up ? 'border-bottom-color: #000; border-top: 0;' : 'border-top-color: #000; border-bottom: 0;')}
`;

const ToolbarEnd = styled.div`
  display: flex;
  gap: 9px;
  margin-left: auto;
`;

const MessageButton = styled(PlainButton)`
  position: relative;
  width: 24px;
  padding-top: 6px;
`;

const MessageCount = styled.span`
  position: absolute;
  top: 2px;
  right: -1px;
  width: 17px;
  height: 17px;
  border-radius: 50%;
  background: #dd2c16;
  color: #fff;
  line-height: 17px;
`;

const ChartWindow = styled.section`
  flex: 1;
  min-height: 0;
  display: flex;
  flex-direction: column;
  gap: 1px;
  padding: 2px 0 0 2px;
  border-left: 2px solid #777;
  background: #000;
`;

const Pane = styled.div`
  position: relative;
  display: flex;
  flex: ${({ $grow }) => $grow} 1 0;
  min-height: 0;
  overflow: hidden;
`;

const Plot = styled.svg`
  flex: 1;
  min-width: 0;
  height: 100%;
  border: 1px solid #fff;
  overflow: hidden;

  > * {
    translate: -1px -1px;
  }
`;

const ScaleColumn = styled.svg`
  width: 39px;
  height: 100%;
  font-size: 10px;
`;

const SvgText = styled.text`
  font-size: 10px;
  fill: ${({ $color }) => $color || '#fff'};
`;

const MarkText = styled.text`
  font-family: 'Liberation Sans', Arial, sans-serif;
  font-size: ${({ $size }) => $size}px;
  fill: ${({ $color }) => $color || '#00ced1'};
`;

const NoteText = styled.text`
  font-family: ${wideFont};
  font-size: 24px;
  fill: #80ffff;
`;

const TradePanel = styled.div`
  position: absolute;
  top: 16px;
  left: 2px;
  display: flex;
  gap: 2px;
  padding: 2px;
  background: #000;
  color: #fff;
  font-family: ${wideFont};
`;

const TradeSide = styled.button`
  display: flex;
  flex-direction: column;
  align-items: ${({ $side }) => ($side === 'sell' ? 'flex-start' : 'flex-end')};
  width: 96px;
  height: 56px;
  background: linear-gradient(#ff4d4d, #d62222 45%, #a80000);
`;

const TradeLabel = styled.span`
  width: 46px;
  height: 22px;
  line-height: 21px;
  text-align: center;
  border-bottom: 1px solid #f88;
`;

const TradePrice = styled.span`
  display: flex;
  align-items: baseline;
  gap: 4px;
  width: 100%;
  padding-left: 14px;
  font-size: 29px;
  line-height: 33px;

  small {
    font-size: 12px;
    font-weight: 600;
  }
  sup {
    align-self: flex-start;
    font-size: 12px;
    line-height: 17px;
    font-weight: 600;
  }
`;

const VolumeBox = styled.div`
  position: absolute;
  top: 0;
  left: 48px;
  display: flex;
  height: 24px;
  width: 101px;
  padding: 2px 2px 3px;
  background: #000;
`;

const VolumeButton = styled.button`
  display: grid;
  place-items: center;
  width: 19px;
  background: #f0f0f0;
  border: 1px solid #bbb;
`;

const VolumeInput = styled.input`
  flex: 1;
  min-width: 0;
  border: 0;
  padding: 0 5px;
  text-align: right;
  font-family: ${uiFont};
  font-size: 12px;
`;

const DateAxis = styled.div`
  position: relative;
  display: flex;
  height: 20px;
  margin-top: -1px;
  flex: none;
  overflow: hidden;
  font-size: 10px;
  line-height: 18px;
  color: #fff;
  white-space: nowrap;

  > span {
    width: 64px;
    flex: none;
    background: linear-gradient(#fff, #fff) 1px 0 / 1px 3px no-repeat;
  }
`;

const DateBadge = styled.div`
  position: absolute;
  top: 4px;
  left: 1049px;
  width: 80px;
  background: #fff;
  color: #000;
  line-height: 11px;
  text-align: center;
`;

const TabStrip = styled.div`
  position: relative;
  display: flex;
  height: 23px;
  flex: none;
  padding-left: 6px;
  border-top: 1px solid #fff;
  border-bottom: 1px solid #fff;
  background: linear-gradient(#ddd 1px, #000 1px 2px, transparent 2px);
`;

const ChartTab = styled.button`
  position: relative;
  width: ${({ $width }) => $width}px;
  flex: none;
  padding-bottom: 1px;
  margin-top: 2px;
  color: #777;
  white-space: nowrap;
  background: linear-gradient(#777, #777) right 3px / 1px 13px no-repeat;
  ${({ $active }) =>
    $active &&
    css`
      background: #fff;
      color: #000;
      border: 1px solid #000;
      border-top: 0;
    `}
`;

const TabArrows = styled.div`
  display: flex;
  align-items: center;
  gap: 14px;
  margin-left: auto;

  i {
    border: 4px solid transparent;
    border-left: 0;
    border-right-color: #888;
  }
  i + i {
    border-right: 0;
    border-left: 4px solid #888;
  }
`;

const Tooltip = styled.div`
  position: absolute;
  z-index: 1;
  left: 178px;
  bottom: 8px;
  padding: 1px 5px;
  border: 1px solid #767676;
  background: #fff;
  color: #555;
  font-family: ${wideFont};
  font-size: 11px;
  line-height: 15px;
  white-space: nowrap;
  box-shadow: 3px 3px 3px rgba(0, 0, 0, 0.5);
`;

const StatusBar = styled.footer`
  display: flex;
  height: 22px;
  flex: none;
  padding-top: 3px;
  font-family: ${wideFont};
  font-size: 11px;
`;

const StatusHint = styled.span`
  flex: 1;
  padding-left: 2px;
  line-height: 18px;
`;

const StatusCell = styled.span`
  display: flex;
  gap: 3px;
  width: ${({ $width }) => $width}px;
  padding-left: 5px;
  border-left: 1px solid #a0a0a0;
  line-height: 18px;
`;

const TaskbarRow = styled.footer`
  position: relative;
  z-index: 2;
  display: flex;
  height: 40px;
  flex: none;
  background: rgba(0, 0, 0, 0.86);
  color: #fff;
  font-family: ${wideFont};
`;

const StartButton = styled.button`
  display: grid;
  place-items: center;
  width: 48px;
`;

const SearchBox = styled.label`
  display: flex;
  align-items: center;
  width: 288px;
  padding: 0 13px 0 11px;
  border: 1px solid #bbb;
  background: #f0f0f0;

  input {
    flex: 1;
    min-width: 0;
    margin-left: 11px;
    padding: 0;
    border: 0;
    background: none;
    font: inherit;
    font-size: 15px;
  }
  input::placeholder {
    color: #444;
  }
`;

const TaskButton = styled.button`
  display: grid;
  place-items: center;
  width: 48px;
  margin-left: ${({ $first }) => ($first ? 3 : 1)}px;
  background-color: ${({ $active }) => ($active ? '#484848' : 'transparent')};
  background-image: linear-gradient(#76b9ed, #76b9ed);
  background-size: ${({ $active }) => ($active ? 48 : 40)}px 2px;
  background-position: bottom center;
  background-repeat: no-repeat;
`;

const Tray = styled.div`
  display: flex;
  align-items: center;
  margin-left: auto;
  padding-right: 17px;
`;

const Weather = styled.div`
  display: flex;
  align-items: center;
  gap: 7px;
  font-size: 14px;
  margin-right: 24px;
`;

const TrayIcons = styled.div`
  display: flex;
  gap: 8px;
  fill: none;
  stroke: #fff;
`;

const Language = styled.span`
  margin-left: 13px;
  font-size: 12px;
`;

const Clock = styled.time`
  display: flex;
  flex-direction: column;
  align-items: center;
  margin-left: 12px;
  font-family: ${uiFont};
  font-size: 11px;
  line-height: 18px;
`;

const Notifications = styled.button`
  position: relative;
  width: 24px;
  margin-left: 17px;
`;

const NotificationCount = styled.span`
  position: absolute;
  top: 5px;
  left: 8px;
  width: 17px;
  height: 17px;
  border: 1px solid #888;
  border-radius: 50%;
  background: #333;
  font-size: 11px;
  line-height: 15px;
`;
